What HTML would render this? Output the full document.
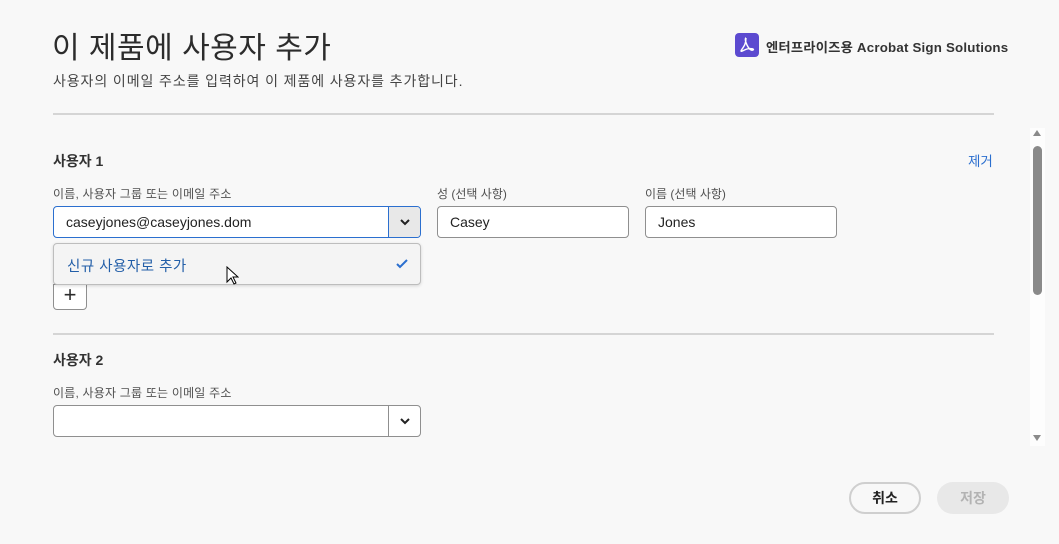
<!DOCTYPE html>
<html><head><meta charset="utf-8"><style>
*{box-sizing:border-box;margin:0;padding:0}
body{width:1059px;height:544px;background:#f8f8f8;font-family:"Liberation Sans","Noto Sans CJK KR",sans-serif;position:relative;overflow:hidden;color:#2c2c2c}
.a{position:absolute}
.inp{position:absolute;height:32px;border:1px solid #8f8f8f;border-radius:4px;background:#fff;font-size:14px;padding:0 12px;line-height:30px;color:#222}
.lbl{position:absolute;font-size:12px;color:#505050}
.btn{position:absolute;width:32px;height:30px;border-left:1px solid #8f8f8f;right:0;top:0;display:flex;align-items:center;justify-content:center}
</style></head><body>
<div class="a" style="left:52px;top:23px;font-size:30px;color:#2c2c2c;letter-spacing:0.5px">이 제품에 사용자 추가</div>
<div class="a" style="left:53px;top:71px;font-size:14px;color:#444;letter-spacing:0.9px;transform-origin:0 0">사용자의 이메일 주소를 입력하여 이 제품에 사용자를 추가합니다.</div>
<div class="a" style="left:735px;top:33px;width:24px;height:24px;background:#5c4ad0;border-radius:4px"><svg width="24" height="24" viewBox="0 0 24 24"><path d="M11 5c-1 0 -1 3 1 7s4 6 6 5-3-2-6-1-6 3-6 2 3-4 4-7 1-6 1-6" stroke="#fff" stroke-width="1.4" fill="none"/></svg></div>
<div class="a" style="left:766px;top:37px;font-size:13.3px;font-weight:bold;color:#333;letter-spacing:0.2px">엔터프라이즈용 Acrobat Sign Solutions</div>
<div class="a" style="left:53px;top:113px;width:941px;height:2px;background:#d5d5d5"></div>
<div class="a" style="left:53px;top:151px;font-size:14px;font-weight:bold;color:#333">사용자 1</div>
<div class="a" style="left:968px;top:150px;font-size:13.5px;color:#2b6fcf">제거</div>
<div class="lbl" style="left:53px;top:185px;letter-spacing:0.2px">이름, 사용자 그룹 또는 이메일 주소</div>
<div class="lbl" style="left:437px;top:185px">성 (선택 사항)</div>
<div class="lbl" style="left:645px;top:185px">이름 (선택 사항)</div>
<div class="inp" style="left:53px;top:206px;width:368px;border-color:#2b6fcf">caseyjones@caseyjones.dom<div class="btn" style="background:#e8e8e8;border-color:#2b6fcf;width:32px;right:0;border-radius:0 3px 3px 0"><svg width="12" height="8"><path d="M2 2l4 4 4-4" stroke="#222" stroke-width="2" fill="none"/></svg></div></div>
<div class="inp" style="left:437px;top:206px;width:192px">Casey</div>
<div class="inp" style="left:645px;top:206px;width:192px">Jones</div>
<div class="a" style="left:53px;top:284px;width:34px;height:26px;border:1px solid #8f8f8f;border-radius:0 0 4px 4px;background:#fff;font-size:22px;text-align:center;line-height:20px">+</div>
<div class="a" style="left:53px;top:243px;width:368px;height:42px;background:#f4f4f4;border:1px solid #bdbdbd;border-radius:4px;box-shadow:0 1px 3px rgba(0,0,0,.15)"></div>
<div class="a" style="left:67px;top:255px;font-size:14.5px;color:#225ea8;letter-spacing:0.5px">신규 사용자로 추가</div>
<div class="a" style="left:396px;top:256px"><svg width="12" height="10"><path d="M1 5l3 3 7-7" stroke="#2b6fcf" stroke-width="2" fill="none"/></svg></div>
<div class="a" style="left:226px;top:266px"><svg width="13" height="20"><path d="M1 1v15l4-4 3 6 2-1-3-6h5z" fill="#fff" stroke="#000"/></svg></div>
<div class="a" style="left:53px;top:333px;width:941px;height:2px;background:#d5d5d5"></div>
<div class="a" style="left:53px;top:350px;font-size:14px;font-weight:bold;color:#333">사용자 2</div>
<div class="lbl" style="left:53px;top:384px;letter-spacing:0.2px">이름, 사용자 그룹 또는 이메일 주소</div>
<div class="inp" style="left:53px;top:405px;width:368px"><div class="btn"><svg width="12" height="8"><path d="M2 2l4 4 4-4" stroke="#222" stroke-width="2" fill="none"/></svg></div></div>
<div class="a" style="left:1030px;top:128px;width:15px;height:318px;background:#fdfdfd"></div>
<div class="a" style="left:1033px;top:146px;width:9px;height:149px;background:#8a8a8a;border-radius:5px"></div>
<div class="a" style="left:1033px;top:130px;width:0;height:0;border:4px solid transparent;border-bottom:6px solid #8a8a8a;border-top:0"></div>
<div class="a" style="left:1033px;top:435px;width:0;height:0;border:4px solid transparent;border-top:6px solid #8a8a8a;border-bottom:0"></div>
<div class="a" style="left:849px;top:482px;width:72px;height:32px;border:2px solid #cfcfcf;border-radius:16px;text-align:center;line-height:28px;font-size:14px;font-weight:bold;color:#222">취소</div>
<div class="a" style="left:937px;top:482px;width:72px;height:32px;background:#e8e8e8;border-radius:16px;text-align:center;line-height:32px;font-size:14px;font-weight:bold;color:#b3b3b3">저장</div>
</body></html>
